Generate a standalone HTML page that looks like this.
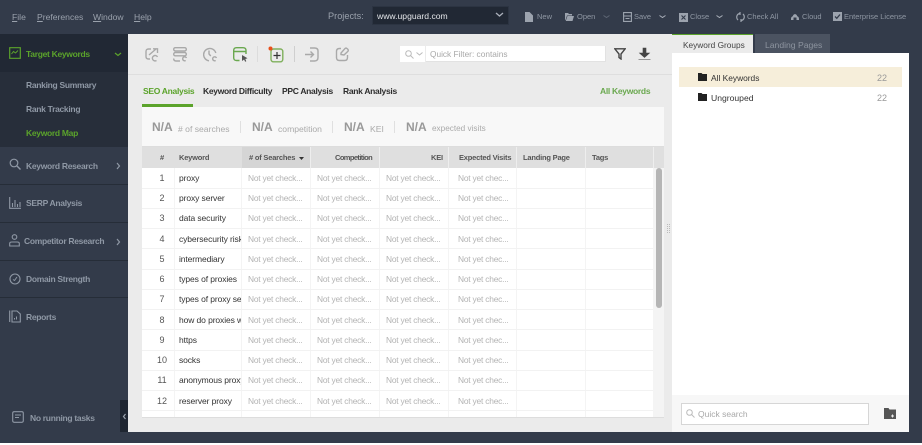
<!DOCTYPE html>
<html><head><meta charset="utf-8"><style>
html,body{margin:0;padding:0;background:#fff}
#p{position:relative;width:922px;height:445px;overflow:hidden;background:#fff;font-family:"Liberation Sans",sans-serif;font-size:9px}
#p div,#p svg{position:absolute}
.t{white-space:nowrap;line-height:12px}
.b{font-weight:bold;font-size:8.5px;letter-spacing:-.3px}
.m{color:#9aa1ac;top:11px;font-size:8.6px}
.m::first-letter{text-decoration:underline}
.tb{color:#8f97a3;top:11px;font-size:7.5px}
.nav{color:#8f98a5;left:26px}
.sep{left:0;width:128px;height:1px;background:#262d38}
.hc{top:1px;height:20px;line-height:20px;font-size:7.5px;letter-spacing:-.2px;font-weight:bold;color:#555;white-space:nowrap}
.n{color:#555;font-size:9px;line-height:12px;text-align:center;width:20px;left:10px}
.k{color:#333;font-size:8.5px;letter-spacing:-.1px;line-height:12px;left:37px;width:62px;overflow:hidden;white-space:nowrap}
.g{color:#b3b3b3;font-size:8.4px;letter-spacing:-.2px;line-height:12px;white-space:nowrap}
.ic{fill:none;stroke:#a9a9a9;stroke-width:1.4}
.s{color:#aaa;font-size:8.6px;top:123px}
.na{color:#999;font-weight:bold;font-size:12px;top:121px}
</style></head><body><div id="p">
<div style="left:0;top:0;width:922px;height:443px;background:#333b4a"></div>

<div class="t m" style="left:12px">File</div>
<div class="t m" style="left:37px">Preferences</div>
<div class="t m" style="left:93px">Window</div>
<div class="t m" style="left:134px">Help</div>
<div class="t" style="left:328px;top:10px;color:#9aa1ac;font-size:9.2px">Projects:</div>
<div style="left:372px;top:6px;width:135px;height:17px;background:#212834;border:1px solid #2c3442"></div>
<div class="t" style="left:377px;top:10px;color:#e3e5e8;font-size:8.6px">www.upguard.com</div>
<svg style="left:495px;top:12px" width="9" height="6"><path d="M1 1l3.500 3 3.500-3" fill="none" stroke="#aab0ba" stroke-width="1.300"/></svg>

<svg style="left:525px;top:12px" width="8" height="10"><path d="M0 0h4.500L8 3.500V10H0z" fill="#9ca3ae"/></svg>
<div class="t tb" style="left:537px">New</div>
<svg style="left:565px;top:13px" width="9" height="8"><path d="M0 0h3l1 1h3v1.500H2L.5 7H0zM2.500 3H9L7.500 8H.7z" fill="#9ca3ae"/></svg>
<div class="t tb" style="left:577px">Open</div>
<svg style="left:603px;top:15px" width="7" height="4"><path d="M.500.500l3 2 3-2" fill="none" stroke="#5e6674"/></svg>
<svg style="left:623px;top:12px" width="9" height="10"><path d="M.600.600h7.800v8.800H.600zM.800 4h7.400M2.500 6.500h4" fill="none" stroke="#9ca3ae" stroke-width="1.100"/></svg>
<div class="t tb" style="left:634px">Save</div>
<svg style="left:659px;top:15px" width="7" height="4"><path d="M.500.500l3 2 3-2" fill="none" stroke="#aab0ba"/></svg>
<svg style="left:679px;top:13px" width="9" height="9"><path d="M0 0h9v9H0z" fill="#9ca3ae"/><path d="M2.500 2.500l4 4M6.500 2.500l-4 4" stroke="#333b4a" stroke-width="1.100"/></svg>
<div class="t tb" style="left:690px">Close</div>
<svg style="left:716px;top:15px" width="7" height="4"><path d="M.500.500l3 2 3-2" fill="none" stroke="#aab0ba"/></svg>
<svg style="left:736px;top:12px" width="9" height="10"><path d="M3.500 1.500A3.800 3.800 0 0 0 2 8M5.500 8.500A3.800 3.800 0 0 0 7 2M4 0v3M5 7v3" fill="none" stroke="#9ca3ae" stroke-width="1.200"/></svg>
<div class="t tb" style="left:747px">Check All</div>
<svg style="left:791px;top:13px" width="8" height="7"><path d="M0 6C0 4 1 3.500 1.800 3.200 2.500 .5 5.500 .5 6.200 3.200 7.200 3.500 8 4.200 8 6v1H5.500V4.500h-3V7H0z" fill="#9ca3ae"/></svg>
<div class="t tb" style="left:802px">Cloud</div>
<svg style="left:833px;top:12px" width="9" height="9"><path d="M0 0h9v9H0z" fill="#9ca3ae"/><path d="M2 4.500l1.800 1.800L7 2.500" fill="none" stroke="#333b4a" stroke-width="1.300"/></svg>
<div class="t tb" style="left:844px">Enterprise License</div>

<div style="left:0;top:34px;width:128px;height:38px;background:#212834"></div>
<div style="left:0;top:72px;width:128px;height:75px;background:#272e3a"></div>
<svg style="left:9px;top:47px" width="12" height="12"><path d="M.700.700h10.600v10.600H.700z" fill="none" stroke="#5ba32b" stroke-width="1.200"/><path d="M2.500 7l2-2.500 2 1.500 2.500-2.500" fill="none" stroke="#5ba32b"/></svg>
<div class="t b" style="left:26px;top:48px;color:#5ba32b">Target Keywords</div>
<svg style="left:114px;top:52px" width="8" height="5"><path d="M1 1l3 2.500L7 1" fill="none" stroke="#5ba32b" stroke-width="1.200"/></svg>
<div class="t b nav" style="top:79px">Ranking Summary</div>
<div class="t b nav" style="top:103px">Rank Tracking</div>
<div class="t b nav" style="top:127px;color:#5ba32b">Keyword Map</div>
<div class="t b nav" style="top:160px">Keyword Research</div>
<svg style="left:9px;top:158px" width="12" height="13"><circle cx="5" cy="5" r="3.800" fill="none" stroke="#8f98a5" stroke-width="1.200"/><path d="M8 8l3.500 3.500" stroke="#8f98a5" stroke-width="1.400"/></svg>
<svg style="left:116px;top:162px" width="5" height="8"><path d="M1 1l2.500 3L1 7" fill="none" stroke="#8f98a5" stroke-width="1.200"/></svg>
<div class="sep" style="top:184px"></div>
<div class="t b nav" style="top:197px">SERP Analysis</div>
<svg style="left:9px;top:197px" width="12" height="12"><path d="M.700 0v11.300H12M3.500 6v4M6 3v7M8.500 7v3M11 5v5" fill="none" stroke="#8f98a5" stroke-width="1.100"/></svg>
<div class="sep" style="top:222px"></div>
<div class="t b nav" style="top:235px;left:24px">Competitor Research</div>
<svg style="left:9px;top:234px" width="11" height="13"><circle cx="5.500" cy="3" r="2.300" fill="none" stroke="#8f98a5" stroke-width="1.100"/><path d="M.700 12V9.500q0-1.500 2-1.500h5.600q2 0 2 1.500V12z" fill="none" stroke="#8f98a5" stroke-width="1.100"/></svg>
<svg style="left:116px;top:238px" width="5" height="8"><path d="M1 1l2.500 3L1 7" fill="none" stroke="#8f98a5" stroke-width="1.200"/></svg>
<div class="sep" style="top:260px"></div>
<div class="t b nav" style="top:273px">Domain Strength</div>
<svg style="left:9px;top:273px" width="12" height="12"><circle cx="6" cy="6" r="5" fill="none" stroke="#8f98a5" stroke-width="1.100"/><path d="M4 6.500l1.500 1L8 4" fill="none" stroke="#8f98a5"/></svg>
<div class="sep" style="top:297px"></div>
<div class="t b nav" style="top:311px">Reports</div>
<svg style="left:9px;top:310px" width="12" height="13"><path d="M.700.500v11.500M3 1h5l3.300 3v8H3z" fill="none" stroke="#8f98a5" stroke-width="1.100"/><path d="M5.500 9.500V8M7.500 9.500V6.500" stroke="#8f98a5"/></svg>
<svg style="left:12px;top:411px" width="12" height="12"><rect x=".7" y=".7" width="10.600" height="10.600" rx="1.500" fill="none" stroke="#8f98a5" stroke-width="1.100"/><path d="M3 4h6M3 6.500h4" stroke="#8f98a5"/></svg>
<div class="t b" style="left:30px;top:412px;color:#8f98a5">No running tasks</div>
<div style="left:120px;top:400px;width:8px;height:32px;background:#1f2631"></div>
<svg style="left:122px;top:413px" width="5" height="7"><path d="M3.500 1L1.500 3.500 3.500 6" fill="none" stroke="#9aa2ad" stroke-width="1.200"/></svg>

<div style="left:128px;top:34px;width:544px;height:398px;background:#ebebeb"></div>
<div style="left:128px;top:74px;width:544px;height:1px;background:#dedede"></div>

<svg style="left:145px;top:48px" width="14" height="15" class="ic"><path d="M6 1H3.500Q1 1 1 3.500v5Q1 11 3.500 11H5M4 7l7-6M8 .8h4.500V5M12.500 9a2.700 2.700 0 1 0-1 3.500"/></svg>
<svg style="left:173px;top:47px" width="15" height="15" class="ic"><rect x=".7" y=".7" width="12.600" height="3.300" rx="1.600"/><rect x=".7" y="5.500" width="12.600" height="3.300" rx="1.600"/><path d="M7 14H3Q.7 14 .7 11.500M13.500 11a2 2 0 1 0-.8 2.500"/></svg>
<svg style="left:203px;top:47px" width="15" height="15" class="ic"><path d="M6 13.800A6.200 6.200 0 1 1 12.800 6M6 3.500V7l1.800 2M13.500 11a2 2 0 1 0-.8 2.500"/></svg>
<svg style="left:233px;top:47px" width="16" height="16" fill="none" stroke="#6aa84f" stroke-width="1.400"><path d="M6.500 13.500H3.500q-2.800 0-2.800-2.800V3.500Q.7.700 3.500.700h6.500q3 0 3 2.800V7M.7 4.500h12.300"/><path d="M9 8l5.500 3.300-2.200.7 1 2.300-1.200.5-1-2.300L9 14z" fill="#555" stroke="none"/></svg>
<div style="left:257px;top:46px;width:1px;height:16px;background:#dcdcdc"></div>
<svg style="left:268px;top:46px" width="16" height="17"><rect x="3" y="3" width="11.800" height="12.800" rx="2.500" fill="none" stroke="#7fb05c" stroke-width="1.400"/><path d="M5.500 9.500h7M9 6v7" stroke="#333" stroke-width="1.200"/><circle cx="2.500" cy="2.500" r="2" fill="#e8501c"/></svg>
<div style="left:294px;top:46px;width:1px;height:16px;background:#cfcfcf"></div>
<svg style="left:305px;top:47px" width="14" height="15" class="ic"><path d="M5 1h4.500q3.500 0 3.500 3v6.500q0 3.500-3.500 3.500H5M0 7.500h8M5.500 4.500l3 3-3 3"/></svg>
<svg style="left:335px;top:47px" width="15" height="15" class="ic"><path d="M6 1.500H4.500q-3 0-3 3v6q0 3 3 3h5q3 0 3-3V8M6 7.500V6l4-4.500q1-.8 2 0l1 1q.7 1-.3 2L9 8z"/></svg>

<div style="left:400px;top:46px;width:25px;height:16px;background:#fff"></div>
<svg style="left:405px;top:50px" width="9" height="9"><circle cx="3.500" cy="3.500" r="2.800" fill="none" stroke="#bbb"/><path d="M5.500 5.500L8.500 8.500" stroke="#bbb"/></svg>
<svg style="left:416px;top:52px" width="7" height="4"><path d="M.500.500l3 2.500 3-2.500" fill="none" stroke="#bbb"/></svg>
<div style="left:426px;top:46px;width:179px;height:15px;background:#fff;border:1px solid #e2e2e2;border-width:0 1px 1px 0"></div>
<div class="t" style="left:430px;top:48px;color:#a8a8a8;font-size:8.3px">Quick Filter: contains</div>
<svg style="left:614px;top:48px" width="12" height="12"><path d="M.800.800h10.400L7 6v5L5 9.500V6z" fill="none" stroke="#444" stroke-width="1.400"/></svg>
<svg style="left:638px;top:47px" width="14" height="14"><path d="M5 1h3v5h3.500L6.500 10.500 1.500 6H5zM.500 12.500h12" fill="#444" stroke="#444" stroke-width=".6"/></svg>

<div class="t b" style="left:143px;top:85px;color:#5ba32b">SEO Analysis</div>
<div style="left:142px;top:104px;width:51px;height:3px;background:#5ba32b"></div>
<div class="t b" style="left:203px;top:85px;color:#2d2d2d">Keyword Difficulty</div>
<div class="t b" style="left:282px;top:85px;color:#2d2d2d">PPC Analysis</div>
<div class="t b" style="left:343px;top:85px;color:#2d2d2d">Rank Analysis</div>
<div class="t b" style="left:600px;top:85px;color:#6aa84f">All Keywords</div>

<div style="left:142px;top:107px;width:522px;height:39px;background:#f8f8f8;border-bottom:1px solid #ddd"></div>
<div class="t na" style="left:152px">N/A</div>
<div class="t s" style="left:178px"># of searches</div>
<div style="left:240px;top:121px;width:1px;height:12px;background:#e0e0e0"></div>
<div class="t na" style="left:252px">N/A</div>
<div class="t s" style="left:278px">competition</div>
<div style="left:332px;top:121px;width:1px;height:12px;background:#e0e0e0"></div>
<div class="t na" style="left:344px">N/A</div>
<div class="t s" style="left:370px">KEI</div>
<div style="left:394px;top:121px;width:1px;height:12px;background:#e0e0e0"></div>
<div class="t na" style="left:406px">N/A</div>
<div class="t s" style="left:432px;font-size:8.2px">expected visits</div>

<div id="tbl" style="left:142px;top:147px;width:522px;height:270px;background:#fff;overflow:hidden;border-bottom:1px solid #ddd">
<div style="left:0;top:0;width:522px;height:21px;background:#dfdfdf"></div>
<div style="left:100px;top:0;width:68px;height:21px;background:#d5d5d5"></div>
<div style="left:168px;top:0;width:1px;height:21px;background:#eee"></div>
<div style="left:237px;top:0;width:1px;height:21px;background:#eee"></div>
<div style="left:306px;top:0;width:1px;height:21px;background:#eee"></div>
<div style="left:374px;top:0;width:1px;height:21px;background:#eee"></div>
<div style="left:443px;top:0;width:1px;height:21px;background:#eee"></div>
<div style="left:511px;top:0;width:1px;height:21px;background:#eee"></div>
<div class="hc" style="left:18px">#</div>
<div class="hc" style="left:37px">Keyword</div>
<div class="hc" style="left:107px"># of Searches</div>
<svg style="left:157px;top:10px" width="5" height="3"><path d="M0 0h5L2.500 3z" fill="#333"/></svg>
<div class="hc" style="left:193px;letter-spacing:-.6px">Competition</div>
<div class="hc" style="left:289px">KEI</div>
<div class="hc" style="left:317px">Expected Visits</div>
<div class="hc" style="left:381px">Landing Page</div>
<div class="hc" style="left:450px">Tags</div>

<div style="left:32px;top:21px;width:1px;height:249px;background:#f4f4f4"></div>
<div style="left:99px;top:21px;width:1px;height:249px;background:#f4f4f4"></div>
<div style="left:168px;top:21px;width:1px;height:249px;background:#f4f4f4"></div>
<div style="left:237px;top:21px;width:1px;height:249px;background:#f4f4f4"></div>
<div style="left:306px;top:21px;width:1px;height:249px;background:#f4f4f4"></div>
<div style="left:374px;top:21px;width:1px;height:249px;background:#f4f4f4"></div>
<div style="left:443px;top:21px;width:1px;height:249px;background:#f4f4f4"></div>
<div style="left:511px;top:21px;width:11px;height:249px;background:#f4f4f4"></div>
<div style="left:514px;top:21px;width:6px;height:140px;background:#b5b5b5;border-radius:3px"></div>

<div style="left:0;top:41px;width:511px;height:1px;background:#f2f2f2"></div>
<div style="left:0;top:61px;width:511px;height:1px;background:#f2f2f2"></div>
<div style="left:0;top:81px;width:511px;height:1px;background:#f2f2f2"></div>
<div style="left:0;top:101px;width:511px;height:1px;background:#f2f2f2"></div>
<div style="left:0;top:122px;width:511px;height:1px;background:#f2f2f2"></div>
<div style="left:0;top:142px;width:511px;height:1px;background:#f2f2f2"></div>
<div style="left:0;top:162px;width:511px;height:1px;background:#f2f2f2"></div>
<div style="left:0;top:182px;width:511px;height:1px;background:#f2f2f2"></div>
<div style="left:0;top:203px;width:511px;height:1px;background:#f2f2f2"></div>
<div style="left:0;top:223px;width:511px;height:1px;background:#f2f2f2"></div>
<div style="left:0;top:243px;width:511px;height:1px;background:#f2f2f2"></div>
<div style="left:0;top:263px;width:511px;height:1px;background:#f2f2f2"></div>

<div class="n" style="top:25px">1</div><div class="k" style="top:25px">proxy</div><div class="g" style="left:106px;top:25px">Not yet check...</div><div class="g" style="left:175px;top:25px">Not yet check...</div><div class="g" style="left:244px;top:25px">Not yet check...</div><div class="g" style="left:316px;top:25px">Not yet chec...</div>
<div class="n" style="top:45px">2</div><div class="k" style="top:45px">proxy server</div><div class="g" style="left:106px;top:45px">Not yet check...</div><div class="g" style="left:175px;top:45px">Not yet check...</div><div class="g" style="left:244px;top:45px">Not yet check...</div><div class="g" style="left:316px;top:45px">Not yet chec...</div>
<div class="n" style="top:65px">3</div><div class="k" style="top:65px">data security</div><div class="g" style="left:106px;top:65px">Not yet check...</div><div class="g" style="left:175px;top:65px">Not yet check...</div><div class="g" style="left:244px;top:65px">Not yet check...</div><div class="g" style="left:316px;top:65px">Not yet chec...</div>
<div class="n" style="top:86px">4</div><div class="k" style="top:86px">cybersecurity risk</div><div class="g" style="left:106px;top:86px">Not yet check...</div><div class="g" style="left:175px;top:86px">Not yet check...</div><div class="g" style="left:244px;top:86px">Not yet check...</div><div class="g" style="left:316px;top:86px">Not yet chec...</div>
<div class="n" style="top:106px">5</div><div class="k" style="top:106px">intermediary</div><div class="g" style="left:106px;top:106px">Not yet check...</div><div class="g" style="left:175px;top:106px">Not yet check...</div><div class="g" style="left:244px;top:106px">Not yet check...</div><div class="g" style="left:316px;top:106px">Not yet chec...</div>
<div class="n" style="top:126px">6</div><div class="k" style="top:126px">types of proxies</div><div class="g" style="left:106px;top:126px">Not yet check...</div><div class="g" style="left:175px;top:126px">Not yet check...</div><div class="g" style="left:244px;top:126px">Not yet check...</div><div class="g" style="left:316px;top:126px">Not yet chec...</div>
<div class="n" style="top:146px">7</div><div class="k" style="top:146px">types of proxy servers</div><div class="g" style="left:106px;top:146px">Not yet check...</div><div class="g" style="left:175px;top:146px">Not yet check...</div><div class="g" style="left:244px;top:146px">Not yet check...</div><div class="g" style="left:316px;top:146px">Not yet chec...</div>
<div class="n" style="top:167px">8</div><div class="k" style="top:167px">how do proxies work</div><div class="g" style="left:106px;top:167px">Not yet check...</div><div class="g" style="left:175px;top:167px">Not yet check...</div><div class="g" style="left:244px;top:167px">Not yet check...</div><div class="g" style="left:316px;top:167px">Not yet chec...</div>
<div class="n" style="top:187px">9</div><div class="k" style="top:187px">https</div><div class="g" style="left:106px;top:187px">Not yet check...</div><div class="g" style="left:175px;top:187px">Not yet check...</div><div class="g" style="left:244px;top:187px">Not yet check...</div><div class="g" style="left:316px;top:187px">Not yet chec...</div>
<div class="n" style="top:207px">10</div><div class="k" style="top:207px">socks</div><div class="g" style="left:106px;top:207px">Not yet check...</div><div class="g" style="left:175px;top:207px">Not yet check...</div><div class="g" style="left:244px;top:207px">Not yet check...</div><div class="g" style="left:316px;top:207px">Not yet chec...</div>
<div class="n" style="top:227px">11</div><div class="k" style="top:227px">anonymous proxy</div><div class="g" style="left:106px;top:227px">Not yet check...</div><div class="g" style="left:175px;top:227px">Not yet check...</div><div class="g" style="left:244px;top:227px">Not yet check...</div><div class="g" style="left:316px;top:227px">Not yet chec...</div>
<div class="n" style="top:248px">12</div><div class="k" style="top:248px">reserver proxy</div><div class="g" style="left:106px;top:248px">Not yet check...</div><div class="g" style="left:175px;top:248px">Not yet check...</div><div class="g" style="left:244px;top:248px">Not yet check...</div><div class="g" style="left:316px;top:248px">Not yet chec...</div>
</div>

<svg style="left:667px;top:224px" width="3" height="10"><path d="M0 .5h3M0 2.500h3M0 4.500h3M0 6.500h3M0 8.500h3" stroke="#bbb" stroke-dasharray="1 1"/></svg>

<div style="left:672px;top:34px;width:81px;height:20px;background:#ebebeb;border-top:1px solid #5ba32b;box-sizing:border-box"></div>
<div class="t" style="left:683px;top:39px;color:#444;font-size:8.3px">Keyword Groups</div>
<div style="left:755px;top:34px;width:75px;height:20px;background:#4b5361"></div>
<div class="t" style="left:765px;top:39px;color:#8d949f;font-size:8.6px">Landing Pages</div>
<div style="left:672px;top:53px;width:237px;height:379px;background:#fff"></div>
<div style="left:679px;top:67px;width:223px;height:20px;background:#f6eeda"></div>
<svg style="left:698px;top:73px" width="9" height="8"><path d="M0 0h3.500l1 1H9v7H0z" fill="#222"/></svg>
<div class="t" style="left:711px;top:72px;color:#333;font-size:8.4px">All Keywords</div>
<div class="t" style="left:877px;top:72px;color:#999;font-size:9px">22</div>
<svg style="left:698px;top:93px" width="9" height="8"><path d="M0 0h3.500l1 1H9v7H0z" fill="#222"/></svg>
<div class="t" style="left:711px;top:92px;color:#333;font-size:8.6px">Ungrouped</div>
<div class="t" style="left:877px;top:92px;color:#999;font-size:9px">22</div>
<div style="left:672px;top:395px;width:237px;height:37px;background:#f7f7f7"></div>
<div style="left:681px;top:403px;width:186px;height:20px;background:#fff;border:1px solid #d6d6d6"></div>
<svg style="left:686px;top:409px" width="9" height="9"><circle cx="3.500" cy="3.500" r="2.800" fill="none" stroke="#bbb"/><path d="M5.500 5.500L8.500 8.500" stroke="#bbb"/></svg>
<div class="t" style="left:698px;top:408px;color:#a8a8a8;font-size:8.500px">Quick search</div>
<svg style="left:884px;top:408px" width="12" height="11"><path d="M0 0h4.500l1 1.500H12V11H0z" fill="#555"/><path d="M7 8h3M8.500 6.500v3" stroke="#eee"/></svg>
</div></body></html>
